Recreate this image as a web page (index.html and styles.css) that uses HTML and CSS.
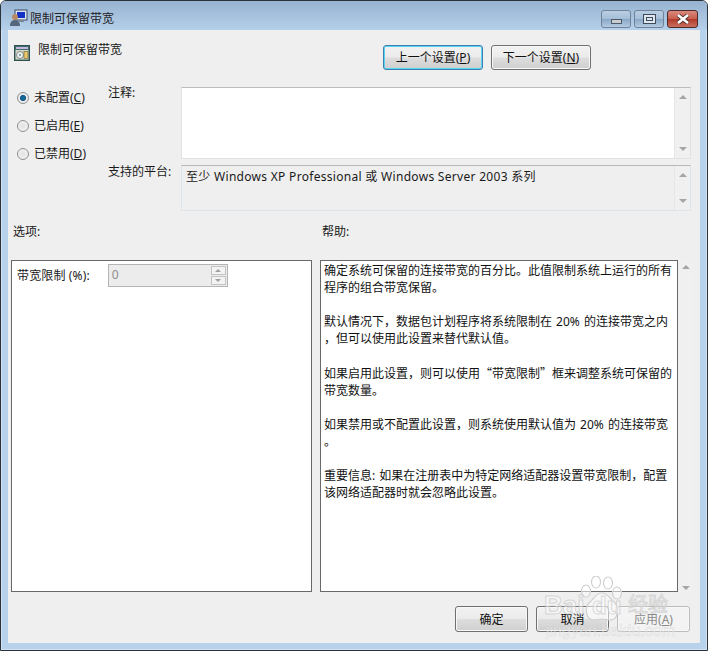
FILE: index.html
```html
<!DOCTYPE html>
<html lang="zh-CN">
<head>
<meta charset="utf-8">
<title>限制可保留带宽</title>
<link rel="stylesheet" href="styles.css">
</head>
<body>
<div class="window">
  <header class="titlebar">
    <svg class="title-icon" width="20" height="20" viewBox="0 0 20 20">
      <rect x="6" y="2" width="12" height="10" fill="#dfe6ee" stroke="#3a4a66"/>
      <rect x="8" y="4" width="8" height="6" fill="#1030c8"/>
      <rect x="10" y="12" width="5" height="2" fill="#7d8794"/>
      <circle cx="6" cy="9" r="3" fill="#b98a66"/>
      <path d="M1 18c0-4 2-6 5-6s5 2 5 6z" fill="#56677d"/>
    </svg>
    <span class="title-text">限制可保留带宽</span>
    <div class="caption">
      <button class="cap cap-min"><i class="glyph-min"></i></button>
      <button class="cap cap-max"><i class="glyph-max"></i></button>
      <button class="cap cap-close">
        <svg width="16" height="10" viewBox="0 0 16 10"><path d="M3 1l10 8M13 1L3 9" stroke="#47302c" stroke-width="4.2"/><path d="M3 1l10 8M13 1L3 9" stroke="#fff" stroke-width="2.6"/></svg>
      </button>
    </div>
  </header>

  <main class="client">
    <div class="head-row">
      <div class="policy">
        <svg class="policy-icon" width="16" height="16" viewBox="0 0 16 16">
          <rect x="0.5" y="0.5" width="15" height="15" fill="#3f6f6c" stroke="#31514f"/>
          <rect x="2" y="2" width="12" height="2" fill="#c7b6e0"/>
          <rect x="1.5" y="5" width="13" height="9.500" fill="#d9d7c8"/>
          <circle cx="6" cy="10" r="3.500" fill="#eef1f0" stroke="#7b8a88"/>
          <circle cx="6" cy="10" r="1" fill="#6e8c88"/>
          <rect x="10" y="6.500" width="4" height="7" fill="#e8c76a" stroke="#6b5f33" stroke-width=".6"/>
        </svg>
        <span>限制可保留带宽</span>
      </div>
      <div class="nav-buttons">
        <button class="btn btn-nav btn-focus">上一个设置(<u>P</u>)</button>
        <button class="btn btn-nav">下一个设置(<u>N</u>)</button>
      </div>
    </div>

    <div class="config-row">
      <div class="radios">
        <label class="radio-row"><span class="radio radio-on"></span><span>未配置(<u>C</u>)</span></label>
        <label class="radio-row"><span class="radio"></span><span>已启用(<u>E</u>)</span></label>
        <label class="radio-row"><span class="radio"></span><span>已禁用(<u>D</u>)</span></label>
      </div>
      <div class="fields">
        <div class="field-label field-label-note">注释:</div>
        <div class="box box-note">
          <div class="box-body"></div>
          <div class="scrollbar"><span class="arrow-up"></span><span class="arrow-down"></span></div>
        </div>
        <div class="field-label field-label-platform">支持的平台:</div>
        <div class="box box-platform">
          <div class="box-body">至少 Windows XP Professional 或 Windows Server 2003 系列</div>
          <div class="scrollbar"><span class="arrow-up"></span><span class="arrow-down"></span></div>
        </div>
      </div>
    </div>

    <div class="section-labels">
      <div class="section-options">选项:</div>
      <div>帮助:</div>
    </div>

    <div class="panels">
      <section class="panel panel-options">
        <span class="limit-label">带宽限制 (%):</span>
        <div class="spinner">
          <span class="spin-value">0</span>
          <div class="spin-buttons">
            <span class="spin-btn"><span class="spin-up"></span></span>
            <span class="spin-btn"><span class="spin-down"></span></span>
          </div>
        </div>
      </section>
      <section class="panel panel-help">
        <p>确定系统可保留的连接带宽的百分比。此值限制系统上运行的所有<br>程序的组合带宽保留。</p>
        <p>默认情况下，数据包计划程序将系统限制在 20% 的连接带宽之内<br>，但可以使用此设置来替代默认值。</p>
        <p>如果启用此设置，则可以使用<span class="cjk">“</span>带宽限制<span class="cjk">”</span>框来调整系统可保留的<br>带宽数量。</p>
        <p>如果禁用或不配置此设置，则系统使用默认值为 20% 的连接带宽<br>。</p>
        <p>重要信息: 如果在注册表中为特定网络适配器设置带宽限制，配置<br>该网络适配器时就会忽略此设置。</p>
      </section>
      <div class="scrollbar scrollbar-help"><span class="arrow-up"></span><span class="arrow-down"></span></div>
    </div>

    <footer class="footer">
      <button class="btn btn-foot">确定</button>
      <button class="btn btn-foot">取消</button>
      <button class="btn btn-foot btn-disabled">应用(<u>A</u>)</button>
    </footer>
  </main>

  <div class="watermark">
    <svg class="wm-paw" width="50" height="50" viewBox="0 0 50 50">
      <g fill="#fff" fill-opacity=".5" stroke="#d0d0d0" stroke-width="1.200">
        <ellipse cx="9" cy="15" rx="4.500" ry="6"/>
        <ellipse cx="19" cy="6" rx="4.500" ry="6"/>
        <ellipse cx="31" cy="7" rx="4.500" ry="6"/>
        <ellipse cx="40" cy="17" rx="4.500" ry="6"/>
        <path d="M25 17c6 0 8 6 13 10 5 5 3 17-5 17-3 0-5-1-8-1s-5 1-8 1c-8 0-10-12-5-17 5-4 7-10 13-10z"/>
      </g>
    </svg>
    <span class="wm-bai">Bai</span><span class="wm-du">du</span><span class="wm-jy">经验</span>
    <span class="wm-url">jingyan.baidu.com</span>
  </div>
</div>
</body>
</html>
```

FILE: styles.css
```css
* { box-sizing: border-box; }
html, body { margin: 0; padding: 0; }
body {
  width: 708px;
  height: 651px;
  overflow: hidden;
  background: #fff;
  font-family: "Noto Sans", "Noto Sans CJK SC", sans-serif;
  font-size: 12px;
  color: #1a1a1a;
}
button { font: inherit; color: inherit; padding: 0; }
.cjk { font-family: "Noto Sans CJK SC", sans-serif; }

.window {
  position: relative;
  width: 708px;
  height: 651px;
  display: flex;
  flex-direction: column;
  padding: 0 7px 7px;
  background: #b9d2ec;
  border: 1px solid #2b3138;
  border-top-left-radius: 6px;
  border-top-right-radius: 6px;
  overflow: hidden;
  box-shadow: inset 0 0 0 1px #d3e3f3;
}

.titlebar {
  flex: none;
  height: 29px;
  display: flex;
  align-items: flex-start;
  background: linear-gradient(#98b3d0, #b5d0ea);
  margin: 0 -7px;
  padding: 0 7px;
}
.title-icon { margin: 7px 0 0 1px; }
.title-text { margin: 10px 0 0 1px; line-height: 16px; color: #1f2328; }
.caption { margin: 9px 2px 0 auto; display: flex; gap: 3px; }
.cap {
  height: 18px;
  width: 30px;
  border: 1px solid #6f8299;
  border-radius: 3px;
  display: flex;
  align-items: center;
  justify-content: center;
  background: linear-gradient(#b9cee3 0, #a6bfd8 48%, #89a7c6 52%, #b3cbe2 100%);
}
.cap-close {
  width: 31px;
  border-color: #4e2a2c;
  background: linear-gradient(#d98a7c 0, #c9604f 48%, #b23a2a 52%, #c9705f 100%);
}
.glyph-min { display: block; width: 11px; height: 5px; margin-top: 4px; background: #c9cdd2; border: 1px solid #4d5a6b; }
.glyph-max { display: block; width: 13px; height: 10px; background: #dfe6ee; border: 1px solid #3d4a5c; box-shadow: inset 0 0 0 2px #dfe6ee, inset 0 0 0 3px #3d4a5c; }

.client {
  flex: 1;
  min-height: 0;
  background: #efefef;
  display: flex;
  flex-direction: column;
}

.head-row {
  flex: none;
  height: 57px;
  display: flex;
  justify-content: space-between;
  align-items: flex-start;
  padding: 15px 109px 0 6px;
}
.policy { display: flex; align-items: flex-start; gap: 8px; line-height: 16px; }
.policy span { margin-top: -5px; line-height: 20px; }
.nav-buttons { display: flex; gap: 8px; }

.btn {
  border: 1px solid #707070;
  border-radius: 3px;
  background: linear-gradient(#f2f2f2 0, #ebebeb 48%, #dddddd 52%, #cfcfcf 100%);
  box-shadow: inset 0 0 0 1px #f8f8f8;
  line-height: 16px;
  color: #111;
}
.btn-nav { width: 100px; height: 25px; }
.btn-focus {
  border-color: #3c7fb1;
  box-shadow: inset 0 0 0 1px #55d4f4;
}
.btn-foot { width: 73px; height: 26px; padding-top: 2px; }
.btn-disabled {
  border-color: #bcbcbc;
  background: #f3f3f3;
  color: #8a8a8a;
}

.config-row { flex: none; display: flex; height: 130px; }
.radios { flex: none; width: 100px; padding: 2px 0 0 9px; display: flex; flex-direction: column; gap: 10px; }
.radio-row { display: flex; align-items: center; gap: 5px; height: 18px; line-height: 18px; }
.radio {
  flex: none;
  width: 12px;
  height: 12px;
  border-radius: 50%;
  border: 1px solid #8e8f8f;
  background: radial-gradient(circle at 50% 50%, #e2e2e2 0, #f6f6f6 100%);
}
.radio-on { background: radial-gradient(circle, #0d6fa5 0, #1c5c86 2.8px, #e9e9e9 3.2px, #f2f2f2 100%); }

.fields {
  flex: 1;
  display: grid;
  grid-template-columns: 73px 510px;
  grid-template-rows: 72px 46px;
  row-gap: 6px;
}
.field-label { line-height: 16px; }
.field-label-note { margin-top: -2px; }
.field-label-platform { margin-top: -1px; }

.box { display: flex; border: 1px solid #dfe3e8; border-top-color: #bcbcbc; background: #fff; }
.box-body { flex: 1; padding: 1px 4px; line-height: 20px; font-size: 12px; letter-spacing: .3px; }
.box-platform { background: #efefef; border-color: #dce4ec; border-top-color: #b8b8b8; }
.scrollbar {
  flex: none;
  width: 16px;
  background: #f0f0f0;
  border-left: 1px solid #e6e6e6;
  display: flex;
  flex-direction: column;
  justify-content: space-between;
  align-items: center;
  padding: 7px 0;
}
.arrow-up, .arrow-down { display: block; width: 0; height: 0; border-left: 4px solid transparent; border-right: 4px solid transparent; }
.arrow-up { border-bottom: 4px solid #a6a6a6; }
.arrow-down { border-top: 4px solid #a6a6a6; }

.section-labels { flex: none; height: 43px; display: flex; padding: 7px 0 0 5px; line-height: 16px; }
.section-options { width: 309px; }

.panels { flex: none; height: 332px; display: flex; padding-left: 3px; }
.panel { background: #fff; border: 1px solid #696969; height: 332px; }
.panel-options { width: 301px; display: flex; align-items: flex-start; gap: 18px; padding: 3px 0 0 5px; margin-right: 8px; }
.limit-label { line-height: 24px; letter-spacing: .15px; }
.spinner { width: 120px; height: 23px; border: 1px solid #b4b4b4; background: #ececec; display: flex; justify-content: space-between; padding: 1px; }
.spin-value { color: #8d8d8d; padding-left: 2px; line-height: 18px; }
.spin-buttons { width: 15px; display: flex; flex-direction: column; gap: 1px; }
.spin-btn { flex: 1; border: 1px solid #c4c4c4; background: #f3f3f3; display: flex; align-items: center; justify-content: center; }
.spin-up, .spin-down { width: 0; height: 0; border-left: 3px solid transparent; border-right: 3px solid transparent; }
.spin-up { border-bottom: 3px solid #a0a0a0; }
.spin-down { border-top: 3px solid #a0a0a0; }

.panel-help { width: 358px; padding: 1px 3px; line-height: 17px; color: #111; word-spacing: 1px; }
.panel-help p { margin: 0 0 17px; }
.scrollbar-help { border-left: none; padding: 5px 0 2px; width: 15px; }

.footer { flex: 1; display: flex; justify-content: flex-end; gap: 8px; padding: 14px 10px 0 0; align-items: flex-start; }

.watermark {
  position: absolute;
  left: 540px;
  top: 575px;
  width: 170px;
  height: 70px;
  pointer-events: none;
  color: rgba(255,255,255,.45);
  font-family: "Liberation Sans", sans-serif;
  -webkit-text-stroke: 1px rgba(200,200,200,.7);
}
.wm-paw { position: absolute; left: 36px; top: 0; }
.wm-bai { position: absolute; left: 3px; top: 16px; font-size: 26px; font-weight: 700; line-height: 26px; }
.wm-du { position: absolute; left: 51px; top: 18px; font-size: 24px; font-weight: 700; line-height: 24px; }
.wm-jy { position: absolute; left: 87px; top: 17px; font-family: "Noto Sans CJK SC", sans-serif; font-size: 20px; line-height: 22px; }
.wm-url { position: absolute; left: 5px; top: 46px; font-size: 16px; line-height: 18px; -webkit-text-stroke: .4px rgba(200,200,200,.7); }
```
